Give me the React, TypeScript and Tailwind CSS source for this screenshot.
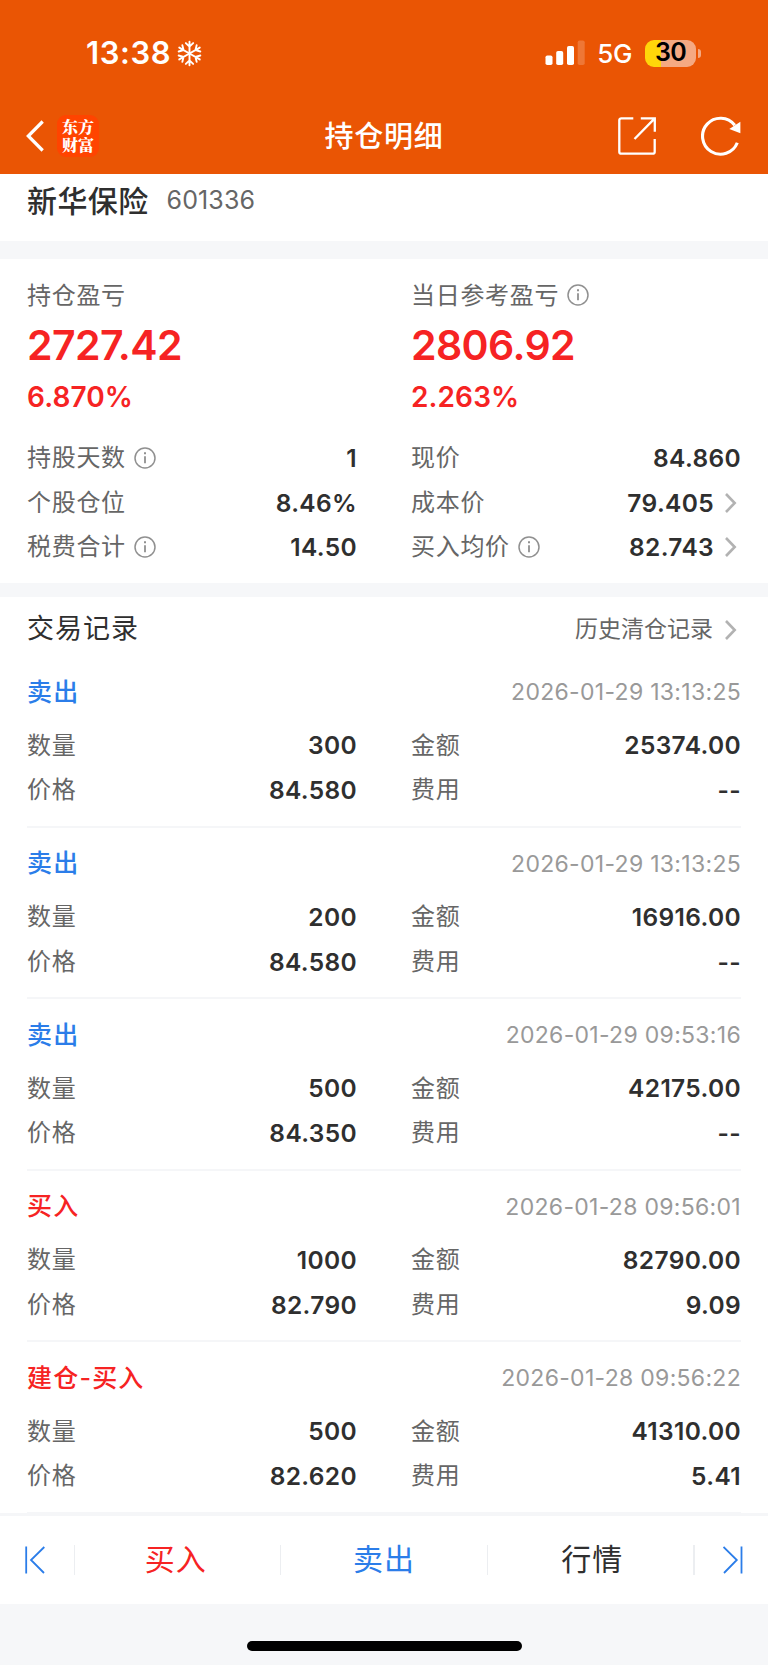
import type { ReactNode } from "react";
import clsx from "clsx";

interface Trade {
  side: "buy" | "sell";
  label: string;
  time: string;
  quantity: string;
  amount: string;
  price: string;
  fee: string;
}

const TRADES: Trade[] = [
  { side: "sell", label: "卖出", time: "2026-01-29 13:13:25", quantity: "300", amount: "25374.00", price: "84.580", fee: "--" },
  { side: "sell", label: "卖出", time: "2026-01-29 13:13:25", quantity: "200", amount: "16916.00", price: "84.580", fee: "--" },
  { side: "sell", label: "卖出", time: "2026-01-29 09:53:16", quantity: "500", amount: "42175.00", price: "84.350", fee: "--" },
  { side: "buy", label: "买入", time: "2026-01-28 09:56:01", quantity: "1000", amount: "82790.00", price: "82.790", fee: "9.09" },
  { side: "buy", label: "建仓-买入", time: "2026-01-28 09:56:22", quantity: "500", amount: "41310.00", price: "82.620", fee: "5.41" },
];

function InfoIcon() {
  return (
    <svg viewBox="0 0 22 22" className="ml-[8px] h-[22px] w-[22px] shrink-0" fill="none" stroke="#909090">
      <circle cx="11" cy="11" r="10" strokeWidth="1.5" />
      <path d="M11 9.2v7" strokeWidth="1.8" />
      <path d="M11 5.2v2" strokeWidth="2" />
    </svg>
  );
}

function ChevronIcon() {
  return (
    <svg viewBox="0 0 12 20" className="mr-[4px] ml-[11px] h-[20px] w-[12px] shrink-0" fill="none" stroke="#b2b2b2" strokeWidth="2.6">
      <path d="M1 1l8.7 9L1 19" />
    </svg>
  );
}

function StatusBar() {
  return (
    <div className="flex h-[106px] items-center justify-between pr-[67px] pl-[86px]">
      <div className="flex items-center">
        <span className="text-[31px] font-semibold tracking-[0.6px]">13:38</span>
        <svg viewBox="0 0 26 28" className="ml-[5.5px] h-[27px] w-[25px]" fill="none" stroke="#fff" strokeWidth="2" strokeLinecap="round" strokeLinejoin="round">
          {[0, 60, 120, 180, 240, 300].map((angle) => (
            <path key={angle} transform={`rotate(${angle} 13 14)`} d="M13 14V1.7M9.2 3.2L13 6.8l3.8-3.6" />
          ))}
        </svg>
      </div>
      <div className="flex items-center">
        <svg viewBox="0 0 40 26" className="h-[26px] w-[40px]" fill="#fff">
          <rect x="0.5" y="15.5" width="7" height="9.5" rx="1.8" />
          <rect x="11.2" y="11" width="7" height="14" rx="1.8" />
          <rect x="22" y="6" width="7" height="19" rx="1.8" />
          <rect x="32.7" y="0.5" width="7" height="24.5" rx="1.8" opacity="0.2" />
        </svg>
        <span className="ml-[12px] text-[26px] font-medium tracking-[-0.4px]">5G</span>
        <div className="ml-[13px] flex h-[27px] w-[51px] items-center justify-center rounded-[9px] bg-linear-to-r from-[#ffd60a] from-32% to-[#f5a982] to-32% text-[25px] font-semibold tracking-[-0.8px] text-black">
          30
        </div>
        <div className="ml-[2px] h-[9px] w-[3px] rounded-r-full bg-[#f5a982]" />
      </div>
    </div>
  );
}

function NavBar() {
  return (
    <div className="grid h-[60px] grid-cols-[1fr_auto_1fr] items-center px-[26px]">
      <div className="flex items-center">
        <svg viewBox="0 0 18 32" className="h-[32px] w-[18px]" fill="none" stroke="#fff" strokeWidth="3.2">
          <path d="M16.7 1.5L2.3 16l14.4 14.5" />
        </svg>
        <div className="ml-[13px] flex h-[42px] w-[42px] items-center justify-center rounded-[9px] bg-[#ff4400]">
          <span className="w-[32px] font-['Noto_Serif_CJK_SC','Noto_Sans_CJK_SC',serif] text-[16px] leading-[18px] font-black break-all">
            东方财富
          </span>
        </div>
      </div>
      <h1 className="pt-[2px] text-[29px] font-medium tracking-[0.8px]">持仓明细</h1>
      <div className="flex items-center justify-end gap-[45px] pr-[1px]">
        <svg viewBox="0 0 38 38" className="h-[38px] w-[38px]" fill="none" stroke="#fff" strokeWidth="2.3">
          <path d="M15.3 1.3H3.3a2 2 0 0 0-2 2v31.4a2 2 0 0 0 2 2h31.4a2 2 0 0 0 2-2V22" />
          <path d="M22.8 1.3h14v13.5M36.5 1.6L16.5 22" />
        </svg>
        <svg viewBox="0 0 40 40" className="h-[40px] w-[40px]" fill="none" stroke="#fff" strokeWidth="3.1">
          <path d="M36.3 26.8A18 18 0 1 1 33.8 9.2" />
          <path d="M39.4 5.8v11.4L28.3 13z" fill="#fff" stroke="none" />
        </svg>
      </div>
    </div>
  );
}

interface FieldProps {
  label: string;
  value: string;
  info?: boolean;
  link?: boolean;
}

function Field({ label, value, info, link }: FieldProps) {
  return (
    <div className="flex h-[44.6px] items-center">
      <span className="text-[24px] tracking-[0.7px] text-[#666]">{label}</span>
      {info && <InfoIcon />}
      <span className="ml-auto text-[24.5px] font-semibold tracking-[0.35px] text-[#2f2f2f]">{value}</span>
      {link && <ChevronIcon />}
    </div>
  );
}

interface ProfitProps {
  label: string;
  amount: string;
  percent: string;
  info?: boolean;
}

function Profit({ label, amount, percent, info }: ProfitProps) {
  return (
    <div className="text-[#f62323]">
      <div className="flex h-[36px] items-center">
        <span className="pt-[2px] text-[24px] tracking-[0.7px] text-[#666]">{label}</span>
        {info && <InfoIcon />}
      </div>
      <div className="mt-[7px] text-[41px] leading-[50px] font-semibold tracking-[-0.6px]">{amount}</div>
      <div className="mt-[9px] text-[28px] leading-[36px] font-semibold tracking-[0.1px]">{percent}</div>
    </div>
  );
}

function TradeRecord({ trade }: { trade: Trade }) {
  return (
    <li className="h-[171.5px] border-b-2 border-[#f5f6f8] pt-[18.5px]">
      <div className="flex h-[36px] items-center justify-between">
        <span
          className={clsx(
            "text-[25px] font-medium tracking-[1.2px]",
            trade.side === "sell" ? "text-[#2b7de9]" : "text-[#f62323]",
          )}
        >
          {trade.label}
        </span>
        <time className="text-[23px] tracking-[0.3px] text-[#999]">{trade.time}</time>
      </div>
      <div className="mt-[13px] grid grid-cols-2 gap-x-[54px]">
        <Field label="数量" value={trade.quantity} />
        <Field label="金额" value={trade.amount} />
        <Field label="价格" value={trade.price} />
        <Field label="费用" value={trade.fee} />
      </div>
    </li>
  );
}

function BarButton({ className, children }: { className: string; children: ReactNode }) {
  return (
    <button className={clsx("flex h-[30px] items-center justify-center border-l border-[#eceef1] pb-[2px] text-[30px] tracking-[1px]", className)}>
      {children}
    </button>
  );
}

function BottomBar() {
  return (
    <footer>
      <div className="flex h-[91px] items-center border-t-[3px] border-[#f5f6f8] bg-white">
        <button className="flex w-[74px] pl-[25px]">
          <svg viewBox="0 0 20 28" className="h-[28px] w-[20px]" fill="none" stroke="#2b7de9" strokeWidth="1.8">
            <path d="M1.2 .5v27M19.3 1L6 14l13 13" />
          </svg>
        </button>
        <div className="grid flex-1 grid-cols-3">
          <BarButton className="pr-[4px] text-[#f62323]">买入</BarButton>
          <BarButton className="text-[#2b7de9]">卖出</BarButton>
          <BarButton className="pl-[4px] text-[#2f2f2f]">行情</BarButton>
        </div>
        <button className="flex h-[30px] w-[75px] items-center justify-end border-l-2 border-[#eceef1] pr-[25px]">
          <svg viewBox="0 0 20 28" className="h-[28px] w-[20px]" fill="none" stroke="#2b7de9" strokeWidth="1.8">
            <path d="M18.5 .5v27M.5 1l13.3 13L1 27" />
          </svg>
        </button>
      </div>
      <div className="flex h-[61px] justify-center bg-[#f6f7f9] pt-[37px]">
        <div className="h-[9.5px] w-[275px] rounded-full bg-black" />
      </div>
    </footer>
  );
}

export default function App() {
  return (
    <div className="flex h-[1665px] w-[768px] flex-col overflow-hidden bg-white font-['Inter','Noto_Sans_CJK_SC',sans-serif]">
      <header className="h-[174px] shrink-0 bg-[#ea5504] text-white">
        <StatusBar />
        <NavBar />
      </header>

      <section className="flex h-[67px] shrink-0 items-center px-[27px] pb-[13px]">
        <h2 className="text-[30px] font-medium tracking-[0.4px] text-[#2f2f2f]">新华保险</h2>
        <span className="ml-[18px] text-[25px] tracking-[0.1px] text-[#666]">601336</span>
      </section>
      <div className="h-[18px] shrink-0 bg-[#f6f7f9]" />

      <section className="h-[324px] shrink-0 px-[27px] pt-[18px]">
        <div className="grid grid-cols-2 gap-x-[54px]">
          <Profit label="持仓盈亏" amount="2727.42" percent="6.870%" />
          <Profit label="当日参考盈亏" amount="2806.92" percent="2.263%" info />
        </div>
        <div className="mt-[21px] grid grid-cols-2 gap-x-[54px]">
          <Field label="持股天数" value="1" info />
          <Field label="现价" value="84.860" />
          <Field label="个股仓位" value="8.46%" />
          <Field label="成本价" value="79.405" link />
          <Field label="税费合计" value="14.50" info />
          <Field label="买入均价" value="82.743" info link />
        </div>
      </section>
      <div className="h-[14px] shrink-0 bg-[#f6f7f9]" />

      <section className="min-h-0 flex-1 px-[27px]">
        <div className="flex h-[59px] items-center pt-[6px]">
          <h3 className="text-[27px] tracking-[1px] text-[#2f2f2f]">交易记录</h3>
          <span className="ml-auto pr-px text-[23px] text-[#666]">历史清仓记录</span>
          <ChevronIcon />
        </div>
        <ul>
          {TRADES.map((trade, i) => (
            <TradeRecord key={i} trade={trade} />
          ))}
        </ul>
      </section>

      <BottomBar />
    </div>
  );
}
